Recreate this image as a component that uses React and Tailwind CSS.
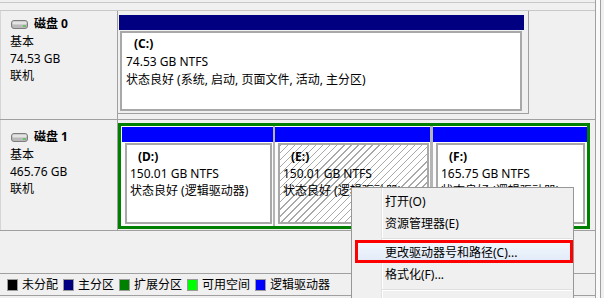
function DiskIcon() {
  return (
    <svg width="17" height="9" viewBox="0 0 17 9" className="shrink-0">
      <rect x="0.5" y="0.5" width="16" height="8" rx="2.5" fill="#b9b9b9" stroke="#7d7d7d" />
      <rect x="1.5" y="1.5" width="14" height="3" rx="1" fill="#e4e4e4" />
      <rect x="12" y="5" width="3" height="2" fill="#6cbf6c" />
    </svg>
  )
}

function DiskLabel({ name, size, pt }) {
  return (
    <div className={`w-[118px] shrink-0 border-l border-r border-l-[#d6d6d6] border-r-[#a0a0a0] pl-[9px] ${pt}`}>
      <div className="flex items-center h-[18px]">
        <span className="ml-[1px] mr-[6px]">
          <DiskIcon />
        </span>
        <span className="font-bold">{name}</span>
      </div>
      <div className="leading-[17px]">基本</div>
      <div className="leading-[17px]">{size}</div>
      <div className="leading-[17px]">联机</div>
    </div>
  )
}

function Logical({ letter, size, status, w, boxW, hatched }) {
  return (
    <div className={`${w} shrink-0 flex flex-col`}>
      <div className="h-[15px] bg-[#0000ff]" />
      <div
        className={`mt-[1px] ml-[3px] ${boxW} h-[81px] border-2 border-[#a8a8a8] pt-[3px] pl-[3px] leading-[17px] whitespace-nowrap overflow-hidden ${
          hatched
            ? 'bg-[repeating-linear-gradient(135deg,#a9a9a9_0px,#a9a9a9_1px,#ffffff_1px,#ffffff_5px)]'
            : 'bg-white'
        }`}
      >
        <div className="pl-[8px] font-bold">{letter}</div>
        <div>{size}</div>
        <div>{status}</div>
      </div>
    </div>
  )
}

const legend = [
  ['bg-[#000000]', '未分配'],
  ['bg-[#000080]', '主分区'],
  ['bg-[#008000]', '扩展分区'],
  ['bg-[#00ff00]', '可用空间'],
  ['bg-[#0000ff]', '逻辑驱动器'],
]

export default function App() {
  return (
    <div className="relative w-[604px] h-[298px] overflow-hidden bg-[#f0f0f0] text-[12px] text-black font-['Noto_Sans','Noto_Sans_CJK_SC',sans-serif]">
      <div className="flex h-full">
        <div className="w-[595px] shrink-0 flex flex-col">
          {/* top edge of the list */}
          <div className="h-[3px] border-b border-[#c8c8c8]" />
          <div className="h-[7px]" />

          {/* 磁盘 0 */}
          <div className="flex h-[110px] border-t border-b border-t-[#c8c8c8] border-b-[#a0a0a0]">
            <DiskLabel name="磁盘 0" size="74.53 GB" pt="pt-[4px]" />
            <div className="flex items-start">
              <div className="w-[411px] border-r border-b border-[#a0a0a0] pl-[1px] pt-[4px] pb-[2px]">
                <div className="w-[405px] h-[15px] bg-[#000080]" />
                <div className="mt-[1px] ml-[1px] w-[402px] h-[80px] border-2 border-[#a8a8a8] bg-white pt-[2px] pl-[4px] leading-[18px]">
                  <div className="pl-[8px] font-bold">(C:)</div>
                  <div>74.53 GB NTFS</div>
                  <div>状态良好 (系统, 启动, 页面文件, 活动, 主分区)</div>
                </div>
              </div>
            </div>
          </div>

          {/* 磁盘 1 */}
          <div className="flex h-[111px] border-b border-[#a0a0a0]">
            <DiskLabel name="磁盘 1" size="465.76 GB" pt="pt-[8px]" />
            <div className="pt-[3px]">
              <div className="w-[472px] h-[106px] border-[3px] border-[#008000] bg-[#fbfbfb] flex pt-[1px]">
                <div className="w-[152px] pl-[1px] shrink-0">
                  <Logical letter="(D:)" size="150.01 GB NTFS" status="状态良好 (逻辑驱动器)" w="w-[151px]" boxW="w-[147px]" />
                </div>
                <div className="w-[157px] shrink-0 border-l-2 border-[#b4b4b4] -mt-[1px] pt-[1px]">
                  <Logical letter="(E:)" size="150.01 GB NTFS" status="状态良好 (逻辑驱动器)" w="w-[155px]" boxW="w-[151px]" hatched />
                </div>
                <div className="w-[157px] shrink-0 border-l-[3px] border-[#b4b4b4] -mt-[1px] pt-[1px]">
                  <Logical letter="(F:)" size="165.75 GB NTFS" status="状态良好 (逻辑驱动器)" w="w-[154px]" boxW="w-[149px]" />
                </div>
              </div>
            </div>
          </div>

          <div className="flex-1" />

          {/* legend */}
          <div className="h-[23px] border-t border-b border-[#a0a0a0] flex items-center pl-[7px]">
            {legend.map(([c, t]) => (
              <div key={t} className="flex items-center mr-[5px]">
                <span className={`w-[11px] h-[12px] ${c} border border-[#9a9a9a] mr-[4px]`} />
                <span className="leading-[14px]">{t}</span>
              </div>
            ))}
          </div>
          <div className="h-[2px]" />
        </div>
        <div className="w-px bg-[#a0a0a0]" />
        <div className="w-[4px] bg-[#fafafa]" />
        <div className="w-px bg-[#a0a0a0]" />
        <div className="flex-1" />
      </div>

      {/* context menu */}
      <div className="absolute left-[351px] top-[187px] w-[223px] h-[124px] border border-[#979797] bg-[#f0f0f0] pt-[3px]">
        <div className="absolute left-[29px] top-0 bottom-0 w-px bg-[#e2e3e3]" />
        <div className="absolute left-[30px] top-0 bottom-0 w-px bg-white" />
        <div className="relative h-[22px] leading-[22px] pl-[33px]">打开(O)</div>
        <div className="relative h-[22px] leading-[22px] pl-[33px]">资源管理器(E)</div>
        <div className="relative h-[7px] ml-[30px] mr-[1px] flex flex-col justify-center">
          <div className="h-px bg-[#e0e0e0]" />
          <div className="h-px bg-white" />
        </div>
        <div className="relative h-[22px] leading-[22px] pl-[33px]">
          <div className="absolute left-[3px] right-0 -top-[2px] bottom-[1px] border-[3px] border-[#ff0000] bg-[linear-gradient(#f2f7fd,#e2ebf8)]" />
          <span className="relative">更改驱动器号和路径(C)...</span>
        </div>
        <div className="relative h-[22px] leading-[22px] pl-[33px]">格式化(F)...</div>
        <div className="relative h-[7px] ml-[30px] mr-[1px] flex flex-col justify-center">
          <div className="h-px bg-[#e0e0e0]" />
          <div className="h-px bg-white" />
        </div>
      </div>
    </div>
  )
}
